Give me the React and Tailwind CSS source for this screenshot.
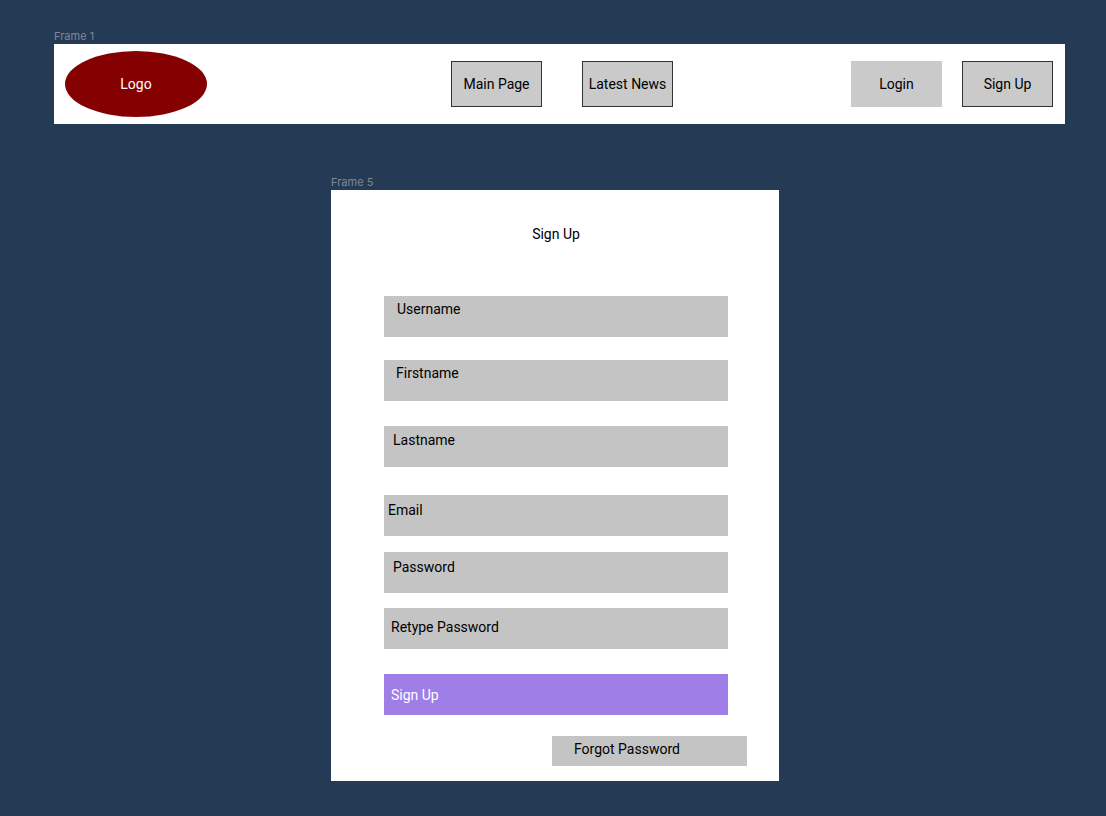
const fields = [
  { id: "username", label: "Username", type: "text", box: "pt-[3px] pl-[13px]" },
  { id: "firstname", label: "Firstname", type: "text", box: "mt-[23px] pt-[3px] pl-3" },
  { id: "lastname", label: "Lastname", type: "text", box: "mt-[25px] pt-1 pl-[9px]" },
  { id: "email", label: "Email", type: "email", box: "mt-7 pt-[5px] pl-1" },
  { id: "password", label: "Password", type: "password", box: "mt-4 pt-[5px] pl-[9px]" },
  { id: "retype", label: "Retype Password", type: "password", box: "mt-[15px] pt-[9px] pl-[7px]" },
];

function NavButton({ children, outlined }) {
  return (
    <button
      type="button"
      className={
        "h-[46px] w-[91px] shrink-0 border bg-[#cacaca] whitespace-nowrap " +
        (outlined ? "border-[#333333]" : "border-[#cacaca]")
      }
    >
      {children}
    </button>
  );
}

function Field({ id, label, type, box }) {
  return (
    <div className={"flex h-[41px] items-start gap-2 bg-[#c4c4c4] pr-2 " + box}>
      <label htmlFor={id} className="shrink-0">
        {label}
      </label>
      <input id={id} name={id} type={type} className="h-5 min-w-0 flex-1 bg-transparent outline-none" />
    </div>
  );
}

export default function App() {
  return (
    <div className="min-h-screen bg-[#253a55] pt-7 pb-[34px] font-['Roboto',sans-serif] text-[14px] leading-5 text-black">
      <div className="pr-[41px] pl-[54px]">
        <p className="font-['Inter',sans-serif] text-[11px] leading-4 text-[#7d8998]">Frame 1</p>
        <header className="grid h-20 grid-cols-[1fr_auto_1fr] items-center bg-white pr-3 pl-[11px]">
          <a
            href="#home"
            className="flex h-[66px] w-[142px] items-center justify-center rounded-[50%] bg-[#850000] text-white"
          >
            Logo
          </a>
          <nav className="flex gap-10 pl-[6px]">
            <NavButton outlined>Main Page</NavButton>
            <NavButton outlined>Latest News</NavButton>
          </nav>
          <div className="flex justify-end gap-5">
            <NavButton>Login</NavButton>
            <NavButton outlined>Sign Up</NavButton>
          </div>
        </header>
      </div>

      <main className="mt-[50px] pl-1">
        <div className="mx-auto max-w-md">
          <p className="font-['Inter',sans-serif] text-[11px] leading-4 text-[#7d8998]">Frame 5</p>
          <form className="bg-white pt-[34px] pr-[51px] pb-[15px] pl-[53px]">
            <h1 className="mb-[52px] text-center">Sign Up</h1>
            {fields.map((field) => (
              <Field key={field.id} {...field} />
            ))}
            <button
              type="button"
              className="mt-[25px] block h-[41px] w-full bg-[#a07ee8] pl-[7px] text-left text-white"
            >
              Sign Up
            </button>
            <a
              href="#forgot"
              className="mt-[21px] -mr-[19px] ml-auto block h-[30px] w-[195px] bg-[#c4c4c4] pt-[3px] pl-[22px]"
            >
              Forgot Password
            </a>
          </form>
        </div>
      </main>
    </div>
  );
}
